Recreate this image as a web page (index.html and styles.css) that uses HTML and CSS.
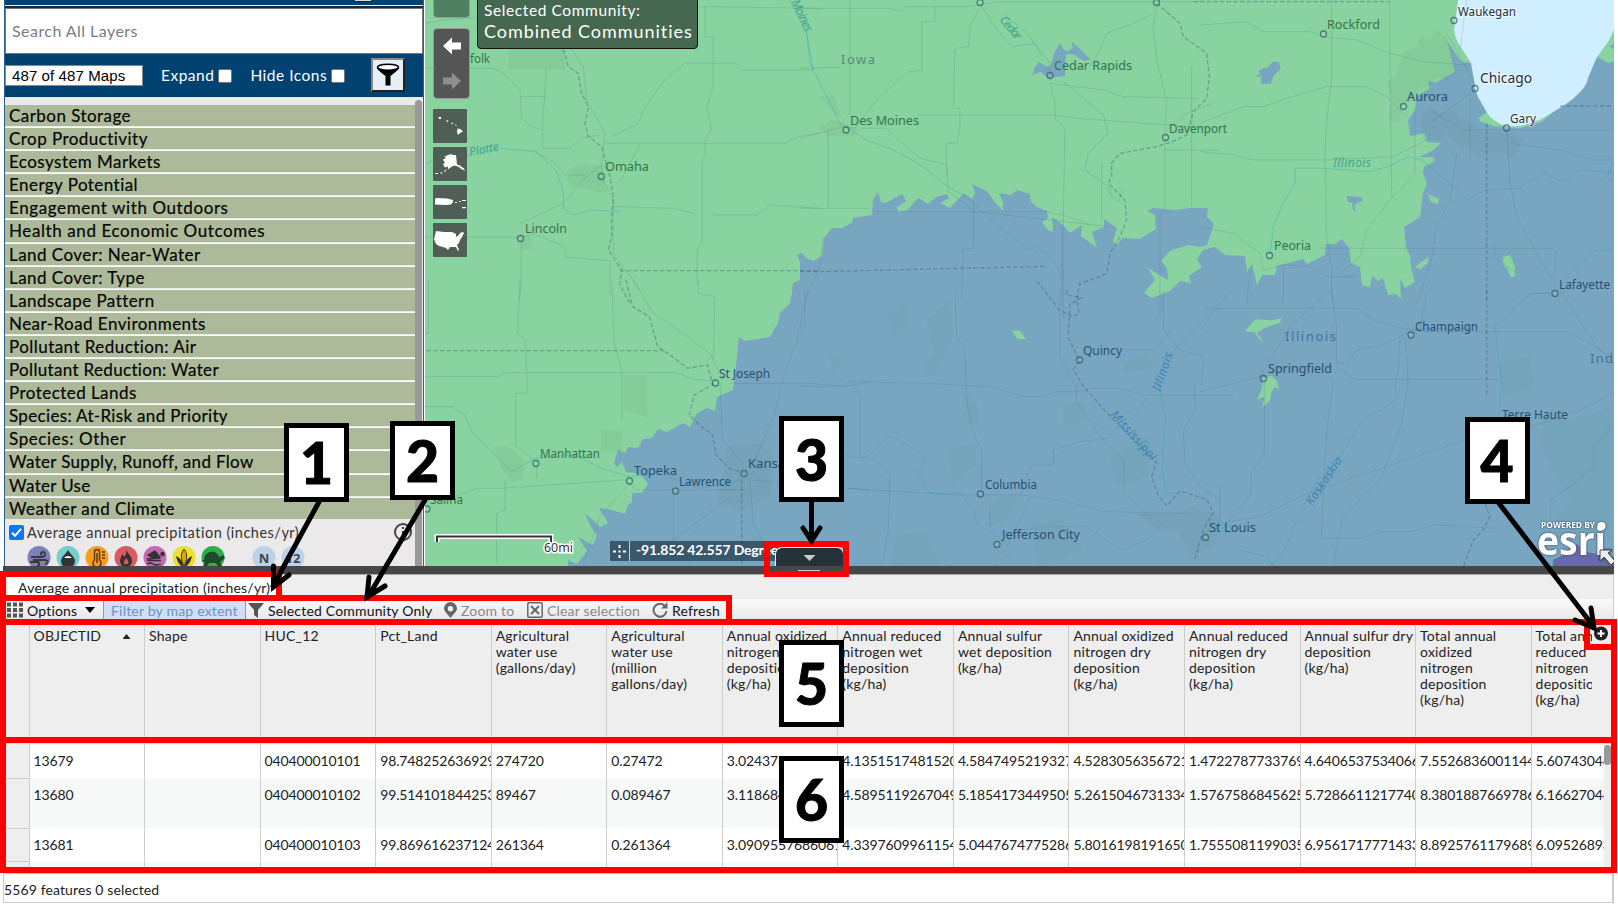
FILE: index.html
```html
<!DOCTYPE html>
<html lang="en">
<head>
<meta charset="utf-8">
<title>Interactive Map</title>
<link rel="stylesheet" href="styles.css">
</head>
<body>
<div class="app">
  <div class="upper">
    <aside class="sidebar">
      <div class="sidebar-top"><i class="stub"></i></div>
      <div class="search"><span>Search All Layers</span></div>
      <div class="filterbar">
        <span class="count">487 of 487 Maps</span>
        <span class="opt expand">Expand<i class="box"></i></span>
        <span class="opt hide">Hide Icons<i class="box"></i></span>
        <span class="funnel"><svg width="24" height="24" viewBox="0 0 24 24"><path d="M1 4c0 3 5 6 8.500 9v9.500h5V13C18 10 23 7 23 4z" fill="#000"/><ellipse cx="12" cy="4.200" rx="10.500" ry="3" fill="#fff" stroke="#000" stroke-width="1.600"/></svg></span>
      </div>
      <div class="layers">
        <div class="list">
          <div class="cat">Carbon Storage</div><div class="cat">Crop Productivity</div><div class="cat">Ecosystem Markets</div><div class="cat">Energy Potential</div><div class="cat wide">Engagement with Outdoors</div><div class="cat wide">Health and Economic Outcomes</div><div class="cat">Land Cover: Near-Water</div><div class="cat">Land Cover: Type</div><div class="cat">Landscape Pattern</div><div class="cat">Near-Road Environments</div><div class="cat">Pollutant Reduction: Air</div><div class="cat tight">Pollutant Reduction: Water</div><div class="cat">Protected Lands</div><div class="cat tight">Species: At-Risk and Priority</div><div class="cat wide">Species: Other</div><div class="cat tight">Water Supply, Runoff, and Flow</div><div class="cat tight">Water Use</div><div class="cat">Weather and Climate</div>
          <div class="layer">
            <svg width="15" height="15" viewBox="0 0 15 15"><rect width="15" height="15" rx="2" fill="#0a75f5"/><path d="M3 7.800l3 3 6-7" fill="none" stroke="#fff" stroke-width="2"/></svg>
            <span>Average annual precipitation (inches/yr)</span>
            <svg class="info" width="18" height="18" viewBox="0 0 18 18"><circle cx="9" cy="9" r="8" fill="none" stroke="#444" stroke-width="2"/><path d="M9 4v2M9 8v6" stroke="#444" stroke-width="2"/></svg>
          </div>
          <svg class="badges" width="300" height="22" viewBox="0 0 300 22">
            <g><circle cx="12" cy="11.500" r="11.500" fill="#7d80bb"/><circle cx="41" cy="11.500" r="11.500" fill="#74cfd1"/><circle cx="70" cy="11.500" r="11.500" fill="#f99d1f"/><circle cx="99" cy="11.500" r="11.500" fill="#da5a62"/><circle cx="128" cy="11.500" r="11.500" fill="#c569b4"/><circle cx="157" cy="11.500" r="11.500" fill="#eee02b"/><circle cx="186" cy="11.500" r="11.500" fill="#2bae4e"/><circle cx="237" cy="11.500" r="11.500" fill="#bcd2e8"/><circle cx="266" cy="11.500" r="11.500" fill="#bcd2e8"/></g>
            <g fill="none" stroke="#383838" stroke-width="1.800"><path d="M4 11h11c4 0 4-5 1-5-2 0-3 2-1 3M6 14h12c4 0 3 4 0 4M3 16h7c3 0 3 4 0 4"/></g>
            <path d="M41 4c2 4 7 7 7 11a7 7 0 0 1-14 0c0-4 5-7 7-11z" fill="#333"/><path d="M37 12q4-4 8 0z" fill="#fff"/>
            <path d="M67.500 14V6a2.500 2.500 0 0 1 5 0v8a4 4 0 1 1-5 0zM70 7v10M75 6h3M75 9h3M75 12h3" fill="none" stroke="#5a3a10" stroke-width="1.500"/>
            <path d="M99 3c1 4 6 7 6 12a6 6 0 0 1-12 0c0-3 2-4 2-7 1 1 2 2 2 3 2-2 3-5 2-8z" fill="#333"/><path d="M99 12c2 2 3 4 2 6h-4c-1-2 1-4 2-6z" fill="#da5a62"/>
            <path d="M121 9l7-4 5 6h-9zM133 12l-13 1M120 14.500h14M120 18q3-2 6 0t8 0" fill="#333" stroke="#333" stroke-width="1.300"/><circle cx="135.500" cy="8" r="2.200" fill="#333"/>
            <path d="M157 3c4 5 3 11 0 17-3-6-4-12 0-17z" fill="#dca71e" stroke="#3a3a10"/><path d="M156 21c-5-3-6-7-7-11 4 2 7 5 7 11zM158 21c5-3 6-7 7-11-4 2-7 5-7 11z" fill="#333"/>
            <path d="M177 14c0-10 13-11 15-3l4-2 2 3-5 4 2 4h-4l-2-3h-7l-2 3h-4l2-4-4-1z" fill="#21482a"/>
            <text x="237" y="16.500" text-anchor="middle" class="badge-text">N</text><text x="266" y="16.500" text-anchor="middle" class="badge-text">12</text>
          </svg>
        </div>
        <div class="scroll"><i></i></div>
      </div>
    </aside>

    <section class="map">
      <svg class="basemap" width="1189" height="566" viewBox="425 0 1189 566">
        <rect x="425" y="0" width="1189" height="566" fill="#78a6c1"/>
        <g class="wood" transform="translate(800 290) scale(.3333)">
          <path d="M265 65l50-25 15 30-30 60-30 10zM380 90l70-60 10 100-40 80-30 60-20-20 30-70zM490 310l40 30 10 60-30 10zM790 340l70 0-10 50-60 20zM440 480l90-20 0 60-70 60zM960 220l80-20 20 30-70 20zM290 740l80-20 50 100-150 5zM590 620l60 0-10 60-70 30-5-40zM700 700l90-10 60 90-140 50zM90 200l30-10 0 40-20 20zM930 500l120-60-10 120-90 30z"/>
          <path d="M2230 380l90 10 110 -40 0 400-80 60-100-100 60-80-60-100-30-80zM2100 220l90-20 10 90-90 30z"/>
        </g>
        <path class="green" d="M425 0V566H568V560L577 564 587 551 578 537 593 545 597 535 591 527 585 514 593 520 600 527 608 523 599 508 612 510 625 514 628 505 632 502V493H642L648 484 643 477 635 473 626 472 622 462 617 467 614 463 618 450 625 453 628 447 638 448 643 439 652 438 658 429 667 432 683 423 690 427 697 413 707 408 715 411 717 397 733 390 735 375 739 337 745 341 770 337 778 323 780 313 790 303 792 293 793 283 800 280 800 262 797 255 802 253 806 258 813 261 822 256 824 238 832 228 842 228 852 223 853 218 872 215 873 200 878 192 881 202 886 203 902 194 906 201 897 207 898 212 908 210 914 202 919 198 928 204 936 197 947 194 949 198 940 203 950 208 964 193 972 199 975 193 972 184 987 191 994 201 1003 211 1003 202 999 193 1011 195 1017 190 1030 194 1031 202 1037 207 1047 211 1048 218 1042 222 1048 230 1052 232 1053 227 1052 217 1063 225 1070 233 1082 225 1081 236 1097 248 1092 232 1104 227V219L1117 228 1113 242 1116 245 1123 238 1140 239 1156 229 1155 215 1147 211 1153 208 1175 210 1190 208 1208 208 1207 217 1214 224 1207 245 1200 247 1188 245 1170 251 1161 261 1167 268 1168 280 1148 268 1155 280 1144 293 1152 298 1170 291 1180 281 1191 283 1189 276 1202 267 1197 259 1203 250 1215 247 1225 255 1245 256 1247 272 1252 264 1257 285 1262 275 1275 275 1277 266 1303 259 1307 264 1325 255 1326 244 1335 244 1342 239 1349 248 1351 263 1360 267 1362 285 1370 287 1372 276 1378 281 1383 278 1388 295 1396 294 1401 299 1400 278 1405 288 1415 282 1411 267 1410 256 1406 247 1404 227 1420 217 1423 193 1427 184 1423 173 1424 167 1435 161 1433 157 1419 157 1432 151 1441 143 1427 142 1425 133 1410 136 1408 120 1415 110 1417 96 1430 88 1428 81 1435 83 1455 72 1452 60 1447 41 1455 53 1462 62 1471 63 1458 43 1454 30 1458 0Z"/>
        <g class="blue">
          <path transform="translate(800 0) scale(.3333)" d="M698 225l5-22 15-18 15 12 18 2 12-40 18-30 10 20 13 5 14-9-2-20 20 18 35 35-20 5-30-20-23 0-2 25 0 40-20 2-30 3-15-8-8-10z"/>
          <path transform="translate(1200 0) scale(.3333)" d="M165 228l15-5-3-13 30-10 10-15 20 1 5 20-20 20-10 25-30 0 3-20zM440 587l45 5 3 10-15 6-10 8 5 25-10-15-1-18-14-2z"/>
        </g>
        <g class="green-fill">
          <path transform="translate(800 290) scale(.3333)" d="M635 122l25 0 18 26-25-1z"/>
          <path transform="translate(1200 290) scale(.3333)" d="M137 120l30-32 50 3 28-7-5 15-40 12-30 17 22 30-15-12-15-20-20 0zM190 265l25-8 15 15 8 25-15-5-8 15-5 25-25 22 10-35-25 10 15-30z"/>
          <path transform="translate(1200 0) scale(.3333)" d="M683 582l35 15-5 15-20-5zM645 800l42-30-5 20-20 18zM910 770l20-5 15 35 0 30-13 0-10-25-12-10zM1190 170l52-80 0 43-15 5 15 10 0 36-17 5zM835 355l28-20 30 20 40 23 70-8 60-35-40 32-65 18-80-7-35-12z"/>
        </g>
        <path class="lake" d="M1458 0L1454 30 Q1455 37 1458 43L1471 63 1474 80 Q1475 90 1478 97L1486 111 1490 117 Q1498 124 1506 126 Q1521 128 1540 120L1563 106 Q1574 99 1582 90 Q1587 84 1588 78L1597 57 1608 42 1614 30V0Z"/>
        <path class="urban" transform="translate(1200 0) scale(.3333)" d="M590 220l20-60 40-20 10-30 30 10 20-30 30 20 20 70 10 40-30 20-30-10-20 30-30 0-10 40-40 10-15 60-30-10 10-60-15-50zM660 330l40-5 20 20 40-20 20 30 30 10 20 30 110 5 30 20-30 55-30-20-80 10-20-25-30 0-40-40-20 20-50 0z"/>
        <path class="urban" transform="translate(420 0) scale(.3333)" d="M440 510l50-20 60 10 10 80-50-10-60-10zM300 700l30 10 10 40-35 0zM265 120h170v90H265z"/>
        <path class="urban" transform="translate(420 280) scale(.3333)" d="M222 498l45 3 45 40-3 55-35 10-30-40zM610 285h73v128l-73-23zM543 450l65 3-3 62-62 0zM920 500l100-10 40 40-10 120-80 40-80-20 20-90z"/>
        <path class="urban" transform="translate(800 290) scale(.3333)" d="M1010 670l110 0 60-20 80 30-10 80-80 40-40-80-60 0z"/>
        <path class="urban" transform="translate(800 0) scale(.3333)" d="M55 380l40-20 40 10 40 15-10 20-80 5zM60 290l40-5 25 70-20-10z"/>
        <path class="purple" d="M1553 560l12-6 12-10 8 8 14 2 15 4v8h-61z"/>

        <g class="road" transform="translate(420 0) scale(.3333)">
          <path d="M0 205h220l30 15 50 50 5 85 30 25 30 10M300 290h78M380 205l-12 160 0 80M15 70l50-10 150-10 200-30M15 712l290 0 35-10 90 35 10 35 130 10 0 100M303 720v140l-5 40M370 445h80l30-30 60-10M300 670l130-60 60-70 60-50M340 455l60 30 35 40 60 0M555 430l540 0 40-20 65-10M480 10l300 15 70-5 350 5M855 20v90h25v150l-20 60 15 70-20 30 0 45-8 20v240l-15 20 0 110M575 410l80-40 20-50 60-80 60-50h150l15 20h220M600 545l60-110M580 620l180 5 60 15M880 645h130l40-30 150 10M450 140l40 60 10 100 55 100-10 90 0 40 35 70 0 160 80 110"/>
        </g>
        <g class="road" transform="translate(800 0) scale(.3333)">
          <path d="M0 25h270l30 10 20-15h180l100-15 600 0M405 20v45l-40 0 0 145-40 5-100 90-60 80M150 0v350M0 415l130-35 30 5M85 390v235M0 205l120-3M355 345l400 0 80 10 400 30M180 385h80l30 30 70 60 80 20 5 80 80 60 400 45M540 20l-30 60-5 60-40 5-5 180 20 0 0 60-10 45-30 0 0 100M610 40l70 60 40 50 30 40 0 55 15 60 0 50 30 30-5 270 0 300M750 250l160 20 60 20 230 5M1070 20l-10 60 10 100 30 120-5 120 0 200-15 30 0 300M1060 40l-60 30-80 30-20 50-30 50M905 490v170M0 625h210M220 635h520l50 10 80 30M520 600v145l-30 0-5 155M1175 620v-420M785 680v220M70 710l-10 90-45 100M1090 450h170M1100 390l60-50 80-30"/>
        </g>
        <g class="road" transform="translate(1200 0) scale(.3333)">
          <path d="M0 75l140-10 50 30 140 0 40 15 100 10 100 40 100 25 130 10M395 0v240l-15 120-5 100 5 250 15 100 0 90M0 370l130-50 60 0 70-25 120-35h120l60 30 60 60M0 455l100 10 60 15h220l200-10 100-50M570 0v160l5 430M645 330l0 190-75 80-70 90-20 80-70 60M0 680l100 20 80 60 10 50 60-15 80 5 50 30h90M360 745h360l340 0M150 810l-10 100M250 800v100M770 460l-20 140-40 80-15 100-40 120M920 390l10 160 20 100 60 110 60 100M1240 550l-20-20 20-40M800 0l-20 150M690 330l100 60h440M740 100l90 160M690 370l120-90 0 200M930 430l150 20 100 30 60 0M885 735v40l60 40M1065 750v80"/>
        </g>
        <g class="road" transform="translate(420 280) scale(.3333)">
          <path d="M25 0v160h-10M15 290h220l20-12h510l60 20 60 5M300 0l-8 160 25 20 5 160h-35v160M575 0l8 190 22 80v150M0 660l90-5 80-30h70l370-25 40 30 330 0M255 600v90l-25 10v150M290 500l60 45 0 50M640 0l60 100 90 60 80 60 40 80M835 0v40l50 10-5 190M930 310h240l110 10 70-15M1165 30l-35 150-45 130-20 90-60 140M900 310l8 170 60 70M620 620l-80 90-50 140M760 640v140l120-90 50-40M1000 600l350 30M990 600l10 130 40 80M765 790l50 60"/>
        </g>
        <g class="road" transform="translate(800 290) scale(.3333)">
          <path d="M15 0v100l-15 30M0 290l130 0 20-15 230 5 190 10 100 30h50l50-15h70l30-10 90 0 70 20h270M465 0l5 140 25 40 5 160 25 100 20 40v120M160 280l20 40v180l50 10 40 50-5 160-20 110M140 595l330 20 200 0 130 20 110 30 260 5M570 640v70M545 610l-30 20M780 0v200l50 90 0 50 80 110 60 60 5 100 80 80M660 620l25-75 15-20h60v-45l80-25 80-10 30-30 50-30 40-60M1090 0v120l50 60 70 20-5 90M970 180h100l40-60M1185 290v70l-35 60 5 100 45 70 60 40M620 770l50-100 20-50M590 760l60 70"/>
        </g>
        <g class="road" transform="translate(1200 290) scale(.3333)">
          <path d="M20 55h450l60 40 80 20 70 10h420l60 30 80 50M390 0l-120 110-90 150-180 45M395 0l15 110 0 110h30l30-40 80-15 100-50h160M193 260v230l-40 60 0 60-40 50-50 60M405 230l60 38 430 0M380 250l20 25-20 150-10 180-5 140h120l60-20 90 0 70-20 180 10M615 140l10 130-20 130-60 160-120 130-30 160M0 740l60-40 120-20 140-70 240-80 180-60 100-40M1242 310l-100 50-150 50M1080 0l110 170 50 50M1242 400l-60 70 0 60-60 50-70 50 0 60M60 590v110M120 780l80 20 20 30M660 120l20-110"/>
        </g>
        <g class="river">
          <path transform="translate(420 0) scale(.3333)" d="M0 500l40-20 90-10 110-25 110 10 60 60 20 60 0 50 30 20 50-15 90 5M1110 0l50 100 20 110"/>
          <path transform="translate(800 0) scale(.3333)" d="M20 100l10 90 30 60 30 60 30 60 80 50 80 30 90 50 60 50 80 50 60 60 80 60 30 30 30-10 40 30 40 60M545 20l40 60 50 60 70-10 20 40M790 245l50 40 70 60 15 55-60 60-10 50 70 50 10 30 20 15 15-40"/>
          <path transform="translate(1200 0) scale(.3333)" d="M210 760l10-80 30-70 35-60 0-45h90l130 10 60-15 60-30 40 10 140 120 50-30 100-5 30-20 50-25 50 25 30-15 30-20 120 10M1060 880h-60l-60 40M1080 860l60-70 50-40 50 0"/>
          <path transform="translate(420 280) scale(.3333)" d="M15 380l80 0 40 25 20 50 60 60 60 60 70-40 120-10 80 40 80 25 90-10 120 45 100-15 70-30"/>
          <path transform="translate(800 290) scale(.3333)" d="M130 495l50 10 30-10 60-60 50 30 55 35-20 50 35 60h90l40 50 10 40 60 40M600 770l60-50 80-10h120l60 40 50 30 70-30 60-60M1242 60l-80 80-60 60-30 60 25 120-10 150 10 80 30 0"/>
          <path transform="translate(1200 290) scale(.3333)" d="M0 120l90-120M600 120v80l-15 90 10 30-50 40-50 20-50 80-40 60-60 60-50 100-40 100-40 50-60 0M885 100l10 90 10 90-10 100M1050 10h-60l-60 60-40 40"/>
        </g>
        <g class="border">
          <path transform="translate(420 0) scale(.3333)" d="M370 0l25 50 20 70 20 40 10 40 30 20 10 60 20 40-10 50 10 40 40 30 25 90 10 60-5 60 0 60-10 40 40 60-5 45 30 55M600 812h600"/>
          <path transform="translate(420 280) scale(.3333)" d="M20 212h720M618 0l20 80 50 30 25 90 30 20 60 45 60-10 15 60-20 10-35 20-15 60 30 30 40 30 10 60 40 40 50 15M965 600v260"/>
          <path transform="translate(800 0) scale(.3333)" d="M0 815h60l680-16M1070 10l70 60 10 40 70 50 8 70-8 65-40 40-20 70-30 15-60 20-110 20-25 30 0 40-10 20 50 50 5 60-20 50-30 50-10 60-20 10-60 20-10 50 8 40-20 10-40-20-30-40-40-50M1180 5h590"/>
          <path transform="translate(1200 0) scale(.3333)" d="M860 370V900M1080 318h160"/>
          <path transform="translate(800 290) scale(.3333)" d="M800 0l0 15 45 8-35 20-5 100 35 70-20 25 30 50 70 80 150 150-15 40 20 60 25 30 40-45 80 25 20 40-30 50-25 90"/>
          <path transform="translate(1200 290) scale(.3333)" d="M860 0v320M855 640l15 40-20 40-30 30-30 80"/>
        </g>
        <g class="towns">
          <circle cx="601.300" cy="176.500" r="3"/><circle cx="520.500" cy="238.500" r="3"/><circle cx="846" cy="130" r="3"/><circle cx="1050" cy="75.500" r="3"/><circle cx="1165.500" cy="137.500" r="3"/><circle cx="980" cy="2.500" r="3"/><circle cx="1156.500" cy="2.500" r="3"/><circle cx="1323.500" cy="34" r="3"/><circle cx="1403.500" cy="106.500" r="3"/><circle cx="1475" cy="88.500" r="3"/><circle cx="1506.500" cy="128" r="3"/><circle cx="1454" cy="20.500" r="3"/><circle cx="1269.500" cy="255.500" r="3"/><circle cx="1555" cy="293.500" r="3"/><circle cx="715.500" cy="383" r="3"/><circle cx="536" cy="463.500" r="3"/><circle cx="629.500" cy="481" r="3"/><circle cx="675.500" cy="491" r="3"/><circle cx="744" cy="473.500" r="3"/><circle cx="1079.500" cy="360" r="3"/><circle cx="980.500" cy="494" r="3"/><circle cx="997" cy="544.500" r="3"/><circle cx="1205.500" cy="537.500" r="3"/><circle cx="1411" cy="335" r="3"/><circle cx="1263.500" cy="378.500" r="3"/><circle cx="427" cy="509" r="3"/>
        </g>
        <g class="label g">
          <text x="470" y="63" textLength="20" lengthAdjust="spacingAndGlyphs">folk</text><text x="605" y="171" textLength="44" lengthAdjust="spacingAndGlyphs">Omaha</text><text x="525" y="233" textLength="42" lengthAdjust="spacingAndGlyphs">Lincoln</text><text x="850" y="125" textLength="69" lengthAdjust="spacingAndGlyphs">Des Moines</text><text x="1054" y="70" textLength="78" lengthAdjust="spacingAndGlyphs">Cedar Rapids</text><text x="1169" y="133" textLength="58" lengthAdjust="spacingAndGlyphs">Davenport</text><text x="1327" y="29" textLength="53" lengthAdjust="spacingAndGlyphs">Rockford</text><text x="1274" y="250" textLength="37" lengthAdjust="spacingAndGlyphs">Peoria</text><text x="540" y="458" textLength="60" lengthAdjust="spacingAndGlyphs">Manhattan</text><text x="430" y="504" textLength="33" lengthAdjust="spacingAndGlyphs">Salina</text>
        </g>
        <g class="label b">
          <text x="1407" y="101" textLength="41" lengthAdjust="spacingAndGlyphs">Aurora</text><text x="1559" y="289" textLength="51" lengthAdjust="spacingAndGlyphs">Lafayette</text><text x="719" y="378" textLength="51" lengthAdjust="spacingAndGlyphs">St Joseph</text><text x="634" y="475" textLength="43" lengthAdjust="spacingAndGlyphs">Topeka</text><text x="679" y="486" textLength="52" lengthAdjust="spacingAndGlyphs">Lawrence</text><text x="748" y="468" textLength="70" lengthAdjust="spacingAndGlyphs">Kansas City</text><text x="1083" y="355" textLength="39" lengthAdjust="spacingAndGlyphs">Quincy</text><text x="985" y="489" textLength="52" lengthAdjust="spacingAndGlyphs">Columbia</text><text x="1002" y="539" textLength="78" lengthAdjust="spacingAndGlyphs">Jefferson City</text><text x="1209" y="532" textLength="47" lengthAdjust="spacingAndGlyphs">St Louis</text><text x="1415" y="331" textLength="63" lengthAdjust="spacingAndGlyphs">Champaign</text><text x="1268" y="373" textLength="64" lengthAdjust="spacingAndGlyphs">Springfield</text><text x="1502" y="419" textLength="66" lengthAdjust="spacingAndGlyphs">Terre Haute</text>
        </g>
        <g class="label state"><text x="841" y="64" textLength="34">Iowa</text><text x="1285" y="341" textLength="51" fill="#456f9d">Illinois</text><text x="1590" y="363" textLength="54" fill="#456f9d">Indiana</text><text x="935" y="575" textLength="62" fill="#456f9d">Missouri</text></g>
        <g class="label dark"><text x="1458" y="16" textLength="58" lengthAdjust="spacingAndGlyphs">Waukegan</text><text x="1480" y="83" textLength="52" lengthAdjust="spacingAndGlyphs" class="big">Chicago</text><text x="1510" y="123" textLength="26" lengthAdjust="spacingAndGlyphs">Gary</text></g>
        <g class="label water">
          <text transform="translate(470 156) rotate(-11)" textLength="30">Platte</text><text transform="translate(791 2) rotate(64)" textLength="34">Moines</text><text transform="translate(999 20) rotate(50)" textLength="27">Cedar</text><text x="1333" y="167" textLength="38">Illinois</text>
          <g fill="#3c83b5"><text transform="translate(1160 392) rotate(-71)" textLength="40">Illinois</text><text transform="translate(1110 415) rotate(48)" textLength="62">Mississippi</text><text transform="translate(1312 506) rotate(-56)" textLength="55">Kaskaskia</text></g>
        </g>
        <g class="scale"><path d="M437 542v-5.500h114v7" stroke="#fff" stroke-width="5"/><path d="M437 542v-5.500h114v7" stroke="#333" stroke-width="2"/><text x="544" y="552" textLength="29" lengthAdjust="spacingAndGlyphs">60mi</text></g>
        <g class="powered"><text x="1541" y="528" textLength="54" lengthAdjust="spacingAndGlyphs" class="pw">POWERED BY</text><text x="1537" y="555" textLength="69" lengthAdjust="spacingAndGlyphs" class="esri">esri</text><circle cx="1601.500" cy="526" r="4"/><path d="M1600 550l12 0-4 3 7 8-4 4-7-8-4 4z" fill="#eee" stroke="#444"/></g>
      </svg>

      <div class="zoom-stub"></div>
      <div class="history">
        <svg width="20" height="18" viewBox="0 0 20 18"><path d="M1 9l9-8.500v5h9v7h-9v5z" fill="#fff"/></svg>
        <svg width="20" height="18" viewBox="0 0 20 18"><path d="M19 9l-9-8.500v5H1v7h9v5z" fill="#8e8e8e"/></svg>
      </div>
      <div class="places">
        <svg viewBox="0 0 34 34"><path d="M5.500 8h2.500v2H6zM13 11l2.500 1-1 1.500zM18 13.500l3 1-2.500.5zM22 15l2.500 2-2-.5zM24.500 19.500l3 .5 2.500 2.500-3 1.500-2 2-1-3z"/></svg>
        <svg viewBox="0 0 34 34"><path d="M13 9l2-1 3-1 2 1 3 0 1 9.500 3 1 4 3 1 2-3-1-4-3-4-1-2 1-3 2-1 1 0-3-3 1-2-3 2-2-1-1-1-2 2-1 1-1-2-1zM2 26h3v1H2zM7 26l3-1-2 2zM11 24l3-2-2 3z"/></svg>
        <svg viewBox="0 0 34 34"><path d="M2 13.500l3-.5 9 .5 6 1.500 0 2-2 2.500-5 .5-11-.5zM22 17h2v1h-2zM26 16h2v.8h-2zM29 15h4v1h-4zM29 22h4v1.300h-4z"/></svg>
        <svg viewBox="0 0 34 34"><path d="M3 8l8 1 8 0 4 2 0 3 3-2 1-2 3-1 1 1-2 4-2 3-1 3-2 2 2 5-1 1-2-4-4 0-2 0-2 3-2-2-3-1-4-1-3-2-2-5z"/></svg>
      </div>
      <div class="community"><span class="small">Selected Community:</span><span class="name">Combined Communities</span></div>
      <div class="coords"><svg width="19" height="19" viewBox="0 0 19 19"><path d="M3 9.500h3M13 9.500h3M9.500 3v3M9.500 13v3M8.500 9.500h2" stroke="#fff" stroke-width="2"/></svg><span>-91.852 42.557 Degrees</span></div>
      <div class="toggle"><i></i></div>
    </section>
  </div>

  <div class="splitter"><i></i></div>

  <section class="tablepane">
    <div class="tabs"><div class="tab">Average annual precipitation (inches/yr)</div></div>
    <div class="toolbar">
      <span class="tool t-options"><svg width="16" height="16" viewBox="0 0 16 16"><path d="M0 2.500h16M0 8h16M0 13.500h16" stroke="#555" stroke-width="4" stroke-dasharray="4 2"/></svg><b>Options</b><svg width="10" height="6" viewBox="0 0 10 6"><path d="M0 0h10L5 6z"/></svg></span>
      <span class="extent">Filter by map extent</span>
      <span class="tool t-sel"><svg width="16" height="15" viewBox="0 0 16 15"><path d="M0 0h16l-6 7v8l-4-3V7z" fill="#555"/></svg><b>Selected Community Only</b></span>
      <span class="tool off t-zoom"><svg width="13" height="16" viewBox="0 0 13 16"><path fill-rule="evenodd" d="M6.500 0a6.500 6.500 0 0 1 6.500 6.500c0 3-4 6-6.500 9.500C4 12.500 0 9.500 0 6.500A6.500 6.500 0 0 1 6.500 0zm0 4a2.700 2.700 0 1 0 0 5.400 2.700 2.700 0 0 0 0-5.400z" fill="#666"/></svg><b>Zoom to</b></span>
      <span class="tool off t-clear"><svg width="16" height="16" viewBox="0 0 16 16"><rect x=".8" y=".8" width="14.400" height="14.400" rx="1" fill="none" stroke="#666" stroke-width="1.500"/><path d="M4 4l8 8M12 4l-8 8" stroke="#666" stroke-width="2"/></svg><b>Clear selection</b></span>
      <span class="tool t-refresh"><svg width="16" height="16" viewBox="0 0 16 16"><path d="M13 4a6.500 6.500 0 1 0 1.500 5" fill="none" stroke="#666" stroke-width="2"/><path d="M15.500 0v6.500H9z" fill="#666"/></svg><b>Refresh</b></span>
    </div>
    <div class="grid head">
      <div class="sel"></div><div>OBJECTID<i class="sort"></i></div><div>Shape</div><div>HUC_12</div><div>Pct_Land</div><div>Agricultural<br>water use<br>(gallons/day)</div><div>Agricultural<br>water use<br>(million<br>gallons/day)</div><div>Annual oxidized<br>nitrogen wet<br>deposition<br>(kg/ha)</div><div>Annual reduced<br>nitrogen wet<br>deposition<br>(kg/ha)</div><div>Annual sulfur<br>wet deposition<br>(kg/ha)</div><div>Annual oxidized<br>nitrogen dry<br>deposition<br>(kg/ha)</div><div>Annual reduced<br>nitrogen dry<br>deposition<br>(kg/ha)</div><div>Annual sulfur dry<br>deposition<br>(kg/ha)</div><div>Total annual<br>oxidized<br>nitrogen<br>deposition<br>(kg/ha)</div><div class="last">Total annual<br>reduced<br>nitrogen<br>deposition<br>(kg/ha)</div>
    </div>
    <div class="rows">
      <div class="grid row r1"><div class="sel"></div><div>13679</div><div></div><div>040400010101</div><div>98.7482526369293</div><div>274720</div><div>0.27472</div><div>3.0243768656713</div><div>4.13515174815203</div><div>4.58474952193271</div><div>4.52830563567211</div><div>1.47227877337694</div><div>4.64065375340665</div><div>7.55268360011443</div><div>5.60743046</div></div>
      <div class="grid row r2"><div class="sel"></div><div>13680</div><div></div><div>040400010102</div><div>99.5141018442533</div><div>89467</div><div>0.089467</div><div>3.1186842015224</div><div>4.58951192670492</div><div>5.18541734495052</div><div>5.26150467313344</div><div>1.57675868456253</div><div>5.72866112177402</div><div>8.38018876697864</div><div>6.16627046</div></div>
      <div class="grid row r3"><div class="sel"></div><div>13681</div><div></div><div>040400010103</div><div>99.8696162371242</div><div>261364</div><div>0.261364</div><div>3.09095576860612</div><div>4.33976099611542</div><div>5.04476747752862</div><div>5.80161981916504</div><div>1.75550811990353</div><div>6.95617177714332</div><div>8.89257611796891</div><div>6.09526893</div></div>
      <div class="grid row r4"><div class="sel"></div><div></div><div></div><div></div><div></div><div></div><div></div><div></div><div></div><div></div><div></div><div></div><div></div><div></div><div></div></div>
      <div class="vscroll"><i></i></div>
    </div>
    <div class="status">5569 features 0 selected</div>
  </section>

  <svg class="marks" width="1618" height="905" viewBox="0 0 1618 905">
    <circle cx="1601" cy="633.500" r="7" fill="#222"/><path d="M1601 630v7M1597.500 633.500h7" stroke="#fff" stroke-width="2"/>
    <g class="red">
      <path d="M3 598V574H279V598M3 598H729V622M3 598V622M3 622H1614V870H3ZM3 740H1617M1587 622V647H1614M767 544H846V574H767Z"/>
    </g>
    <g class="arrows">
      <path d="M320 500L273 586M273.500 566V587L289 575M425 500L368 597M369 577L367 597 385 586M811.500 500V540M803 528L811.500 541 820 528M1498 502L1594 627M1591 608L1594 628 1575 620"/>
    </g>
    <g class="cards">
      <rect x="286.500" y="425.500" width="60" height="74"/><rect x="392.500" y="423.500" width="60" height="74"/><rect x="781.500" y="418.500" width="60" height="81"/><rect x="1467.500" y="419.500" width="60" height="82"/><rect x="781.500" y="642.500" width="60" height="82"/><rect x="781.500" y="758.500" width="60" height="82"/>
    </g>
    <g class="digits"><text x="316.500" y="484">1</text><text x="422.500" y="482">2</text><text x="811.500" y="481">3</text><text x="1497" y="482">4</text><text x="811.500" y="705">5</text><text x="811.500" y="821">6</text></g>
  </svg>
</div>
</body>
</html>
```

FILE: styles.css
```css
* { box-sizing: border-box; }
body { margin: 0; background: #fff; font-family: Lato, "Open Sans", sans-serif; color: #111; }
.app { position: relative; width: 1618px; height: 905px; overflow: hidden; padding-left: 3px; }
.upper { display: flex; height: 566px; width: 1611px; }

/* Layer list */
.sidebar { width: 420px; margin: 0 1px; border: solid #2c608c; border-width: 0 1px; display: flex; flex-direction: column; overflow: hidden; flex: none; }
.sidebar-top { height: 8px; background: #024270; border-bottom: 2px solid #11284c; box-shadow: inset 0 -1px #e8f0f5; flex: none; padding-left: 350px; }
.stub { display: block; width: 16px; height: 2px; background: #ddd; border-bottom: 1px solid #222; }
.search { height: 46px; background: #fff; border: 1px solid #777; display: flex; align-items: center; padding: 0 0 1px 6px; font-size: 16px; letter-spacing: .45px; color: #7c7c7c; flex: none; }
.filterbar { height: 43px; background: #024270; display: flex; align-items: center; color: #fff; font-size: 15.500px; flex: none; padding-bottom: 1px; }
.count { width: 138px; height: 21px; border: 1px solid #888; background: #fff; color: #000; font: 15px/19px "Liberation Sans", Arial, sans-serif; letter-spacing: .1px; padding-left: 6px; white-space: nowrap; }
.opt { display: flex; align-items: center; gap: 4px; letter-spacing: .5px; white-space: nowrap; }
.expand { margin-left: 18px; }
.hide { margin-left: 18px; }
.box { width: 14px; height: 14px; background: #fff; border: 1px solid #767676; border-radius: 2px; margin-top: 2px; }
.funnel { margin-left: 26px; width: 34px; height: 34px; background: #e8eef6; border: 2px solid; border-color: #888 #222 #222 #888; display: grid; place-items: center; }
.layers { display: flex; flex: 1; background: #ebe9ea; overflow: hidden; }
.list { width: 410px; padding-top: 8px; flex: none; }
.cat { height: 21.100px; margin-bottom: 2px; background: #adba9a; box-shadow: 0 1px #e9ebe4, 0 2px #fff; padding-left: 4px; font-size: 17px; line-height: 22px; letter-spacing: .45px; color: #050505; -webkit-text-stroke: .2px #050505; white-space: nowrap; }
.cat.wide { letter-spacing: .6px; }
.cat.tight { letter-spacing: .33px; }
.cat:nth-child(18) { box-shadow: none; margin-bottom: 0; }
.layer { height: 27px; display: flex; align-items: center; padding-left: 4px; font-size: 14.500px; letter-spacing: .5px; color: #333; white-space: nowrap; }
.layer span { margin-left: 3px; flex: 1; }
.info { margin-right: 3px; }
.badges { display: block; margin-left: 21.500px; }
.badge-text { font: 700 13px "Noto Sans", sans-serif; fill: #3b4753; }
.scroll { flex: 1; padding-top: 3px; }
.scroll i { display: block; width: 7px; height: 480px; border-radius: 4px 4px 0 0; background: #999; }

/* Map */
.map { position: relative; width: 1189px; height: 566px; overflow: hidden; flex: none; }
.basemap { display: block; }
.green, .green-fill { fill: #88d39f; }
.blue { fill: #78a6c1; }
.lake { fill: #cfeeff; }
.purple { fill: #6669aa; }
.wood { fill: #5c9d9e; opacity: .14; }
.urban { fill: #557f60; opacity: .09; }
.road { fill: none; stroke: #315c6b; stroke-opacity: .16; stroke-width: 3; stroke-linejoin: round; }
.river { fill: none; stroke: #1b9ac5; stroke-opacity: .3; stroke-width: 3; stroke-linejoin: round; }
.border { fill: none; stroke: #355970; stroke-opacity: .4; stroke-width: 4; stroke-dasharray: 13 7; }
.towns { fill: #fff; fill-opacity: .12; stroke: #28535b; stroke-opacity: .65; stroke-width: 1.300; }
.label { font: 13px "Noto Sans", "Open Sans", sans-serif; }
.g { fill: #35754e; }
.b { fill: #284f76; }
.dark { fill: #242d33; paint-order: stroke; stroke: #fff; stroke-opacity: .65; stroke-width: 2px; }
.big { font-size: 14.500px; }
.state { fill: #568d74; }
.water { font-size: 12px; font-style: italic; fill: #45a593; }
.scale { fill: none; }
.scale text { font: 13px "Noto Sans", sans-serif; fill: #333; stroke: #fff; stroke-width: 3px; paint-order: stroke; }
.powered { fill: #fff; filter: drop-shadow(0 0 1px #335); }
.pw { font: 700 8px "Open Sans", sans-serif; }
.esri { font: 700 39px "Open Sans", sans-serif; }
.zoom-stub { position: absolute; left: 8px; top: -10px; width: 37px; height: 28px; background: #4f8062; border: 1px solid #84a68f; border-radius: 4px; }
.history { position: absolute; left: 8px; top: 28px; width: 37px; height: 71px; background: #555; border: 1px solid #999; border-radius: 4px; display: flex; flex-direction: column; align-items: center; justify-content: space-around; }
.places { position: absolute; left: 8px; top: 109px; display: grid; gap: 4px; }
.places svg { width: 34px; height: 34px; background: #505f55; border-radius: 1px; fill: #fff; }
.community { position: absolute; left: 52px; top: -12px; width: 221px; height: 61px; padding: 11px 0 0 6px; display: flex; flex-direction: column; background: #466850; border: 1px solid #111; border-radius: 4px; color: #fff; white-space: nowrap; }
.small { font-size: 15.500px; line-height: 20px; letter-spacing: .6px; }
.name { font-size: 18px; line-height: 23px; letter-spacing: .95px; }
.coords { position: absolute; left: 185px; top: 541px; width: 171px; height: 20px; background: rgba(25, 46, 62, .65); color: #fff; display: flex; align-items: center; font-size: 14px; font-weight: 700; white-space: nowrap; letter-spacing: -.15px; }
.coords svg { flex: none; }
.coords span { border-left: 1px solid #ccc; padding-left: 6px; line-height: 18px; height: 20px; }
.toggle { position: absolute; left: 350px; top: 547px; width: 69px; height: 20px; background: #25323a; border: 1px solid #eee; border-bottom: 0; border-radius: 7px 7px 0 0; }
.toggle i { display: block; margin: 7px auto; width: 12px; height: 6px; background: #ccc; clip-path: polygon(0 0, 100% 0, 50% 100%); }
.splitter { width: 1611px; height: 8px; background: #474747; padding: 4px 0 0 795px; }
.splitter i { display: block; width: 22px; height: 1px; background: #ccc; }

/* Attribute table */
.tablepane { width: 1611px; height: 330px; border-right: 1px solid #ccc; font-size: 14px; color: #222; }
.tabs { height: 25px; background: #eee; border-top: 1px solid #aaa; padding-left: 5px; }
.tab { width: 270px; height: 24px; background: #fff; padding-left: 10px; line-height: 25px; font-size: 14px; letter-spacing: .22px; white-space: nowrap; }
.toolbar { height: 22px; background: linear-gradient(#fafafa, #e6e6e6); display: grid; grid-template-columns: 99px 140px 197px 83px 125px 90px; align-items: center; white-space: nowrap; padding-left: 4px; }
.tool { display: flex; align-items: center; gap: 4px; }
.tool b { font-weight: 400; letter-spacing: .18px; color: #111; }
.tool.off b { color: #888; }
.t-options svg:last-child { margin-left: 4px; }
.extent { height: 20px; line-height: 22px; margin: 0 0 0 -3px; background: #d3def0; border: solid #759cd9; border-width: 0 1px; color: #6693cf; padding-left: 7px; letter-spacing: .2px; }
.t-sel { padding-left: 2px; }
.t-zoom, .t-clear, .t-refresh { margin-left: 1px; }
.grid { display: grid; grid-template-columns: 25.500px repeat(14, 115.550px); }
.grid > div { overflow: hidden; white-space: nowrap; border-left: 1px solid #ccc; padding-left: 4px; }
.grid > .sel { border-left: 0; background: #eee; }
.head { height: 123px; width: 1610px; background: #eee; overflow: hidden; line-height: 16.200px; border-bottom: 1px solid #ddd; }
.head > div { padding-top: 6.500px; letter-spacing: .2px; position: relative; }
.head > .last { border-right: 0; width: 61px; }
.sort { position: absolute; left: 93px; top: 13px; width: 8px; height: 5px; background: #222; clip-path: polygon(50% 0, 100% 100%, 0 100%); }
.rows { position: relative; height: 129px; overflow: hidden; }
.row > div { letter-spacing: -.12px; border-bottom: 1px solid #fff; }
.row > .sel { border-bottom-color: #ccc; }
.r1 { height: 35px; line-height: 34px; }
.r2 { height: 50px; line-height: 31px; background: #f7f9f8; }
.r3 { height: 33px; line-height: 31px; }
.r4 { height: 11px; background: #f7f9f8; }
.vscroll { position: absolute; right: 2px; top: 1px; width: 7px; height: 122px; background: #eee; }
.vscroll i { display: block; height: 20px; background: #999; border-radius: 4px; }
.status { height: 30px; border: 1px solid #ccc; line-height: 31px; letter-spacing: .12px; background: #fff; }

/* Callouts */
.marks { position: absolute; left: 0; top: 0; }
.red { fill: none; stroke: #f00; stroke-width: 6; }
.arrows { fill: none; stroke: #000; stroke-width: 5; stroke-linecap: round; }
.cards { fill: #fff; stroke: #000; stroke-width: 5; }
.digits { font: 900 57px Lato, sans-serif; text-anchor: middle; stroke: #000; stroke-width: 1px; }
```
